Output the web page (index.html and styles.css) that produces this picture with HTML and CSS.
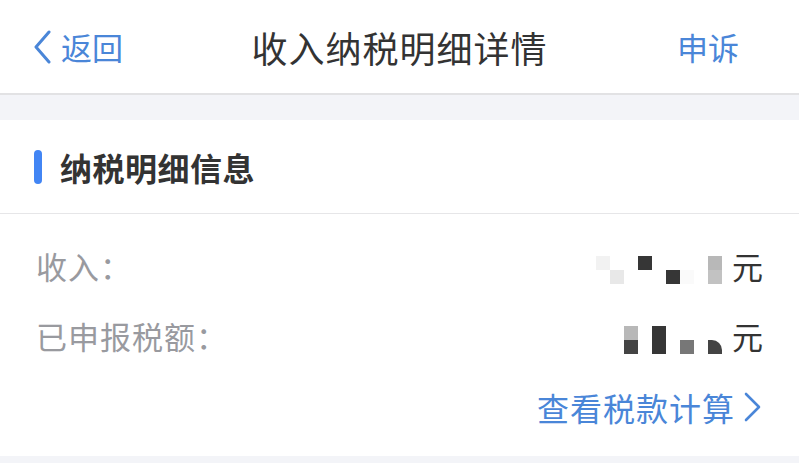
FILE: index.html
```html
<!DOCTYPE html>
<html lang="zh-CN">
<head>
    <meta charset="UTF-8">
    <meta name="viewport" content="width=device-width, initial-scale=1.0">
    <title>收入纳税明细详情</title>
    <link rel="stylesheet" href="styles.css">
</head>
<body>

    <!-- Top navigation -->
    <header class="nav">
        <a class="nav-back" href="#">
            <svg class="back-icon" width="18" height="34" viewBox="0 0 18 34">
                <polyline points="16,2 3,17 16,32" fill="none" stroke="currentColor" stroke-width="3" stroke-linecap="round" stroke-linejoin="round"/>
            </svg>
            <span>返回</span>
        </a>
        <h1 class="nav-title">收入纳税明细详情</h1>
        <a class="nav-action" href="#">申诉</a>
    </header>

    <div class="spacer"></div>

    <!-- Detail card -->
    <section class="card">
        <div class="card-head">
            <span class="head-bar"></span>
            <h2>纳税明细信息</h2>
        </div>

        <div class="card-body">
            <div class="row">
                <span class="row-label">收入：</span>
                <span class="row-value">
                    <span class="mosaic cols9">
                        <i class="c1"></i><i></i><i></i><i class="c9"></i><i></i><i></i><i></i><i></i><i class="c5"></i>
                        <i></i><i class="c2"></i><i></i><i></i><i></i><i class="c9"></i><i class="c0"></i><i></i><i class="c4"></i>
                    </span>
                    元
                </span>
            </div>
            <div class="row">
                <span class="row-label">已申报税额：</span>
                <span class="row-value">
                    <span class="mosaic cols7">
                        <i class="c5"></i><i></i><i class="c9"></i><i></i><i></i><i></i><i></i>
                        <i class="c8"></i><i></i><i class="c9"></i><i></i><i class="c7"></i><i></i><i class="c8 cut"></i>
                    </span>
                    元
                </span>
            </div>
            <div class="row row-link">
                <a class="calc-link" href="#">
                    <span>查看税款计算</span>
                    <svg width="22" height="30" viewBox="0 0 22 30">
                        <polyline points="5,2 18,15 5,28" fill="none" stroke="currentColor" stroke-width="2.6" stroke-linecap="round" stroke-linejoin="round"/>
                    </svg>
                </a>
            </div>
        </div>
    </section>

    <div class="spacer bottom"></div>

</body>
</html>
```

FILE: styles.css
```css
/* Base */
body {
    margin: 0;
    padding: 0;
    background-color: #f3f4f8;
    font-family: "Noto Sans CJK SC", "Noto Sans", sans-serif;
    color: #333;
}

a {
    text-decoration: none;
}

/* Navigation bar */
.nav {
    display: grid;
    grid-template-columns: 1fr auto 1fr;
    align-items: center;
    height: 93px;
    padding: 0 33px;
    background-color: #fff;
    border-bottom: 2px solid #e2e2e4;
}

.nav-back {
    display: flex;
    align-items: center;
    gap: 10px;
    color: #4a86d8;
    font-size: 31px;
    justify-self: start;
}

.back-icon {
    display: block;
}

.nav-title {
    margin: 0;
    font-size: 36px;
    font-weight: normal;
    letter-spacing: 1px;
    color: #333;
}

.nav-action {
    justify-self: end;
    margin-right: 27px;
    color: #4a86d8;
    font-size: 31px;
}

/* Grey gap between blocks */
.spacer {
    height: 25px;
}

.spacer.bottom {
    height: 7px;
}

/* Card */
.card {
    background-color: #fff;
}

.card-head {
    display: flex;
    align-items: center;
    gap: 18px;
    height: 93px;
    padding-left: 34px;
    border-bottom: 1px solid #e6e6e8;
}

.head-bar {
    width: 8px;
    height: 34px;
    border-radius: 4px;
    background-color: #4285f4;
}

.card-head h2 {
    margin: 0;
    font-size: 32px;
    font-weight: bold;
    letter-spacing: 0.5px;
    color: #333;
}

.card-body {
    padding: 16px 36px 12px 36px;
}

.row {
    display: flex;
    align-items: center;
    justify-content: space-between;
    height: 70px;
}

.row-label {
    font-size: 31px;
    color: #999a9f;
    letter-spacing: 1px;
}

.row-value {
    display: flex;
    align-items: center;
    gap: 10px;
    font-size: 31px;
    color: #333;
}

/* Blurred amount */
.mosaic {
    display: grid;
    grid-auto-rows: 14px;
    margin-top: 10px;
}

.mosaic.cols9 {
    grid-template-columns: repeat(9, 14px);
}

.mosaic.cols7 {
    grid-template-columns: repeat(7, 14px);
}

.mosaic i {
    display: block;
}

.mosaic .c0 { background-color: #fafafa; }
.mosaic .c1 { background-color: #f2f2f2; }
.mosaic .c2 { background-color: #e8e8e8; }
.mosaic .c4 { background-color: #c2c2c2; }
.mosaic .c5 { background-color: #b8b8b8; }
.mosaic .c7 { background-color: #777; }
.mosaic .c8 { background-color: #444; }
.mosaic .c9 { background-color: #363636; }

.mosaic .cut {
    border-top-right-radius: 10px;
}

/* Calculation link */
.row-link {
    justify-content: flex-end;
    height: 74px;
}

.calc-link {
    display: flex;
    align-items: center;
    gap: 6px;
    color: #4a86d8;
    font-size: 32px;
    letter-spacing: 1px;
}

.calc-link svg {
    display: block;
}
```
